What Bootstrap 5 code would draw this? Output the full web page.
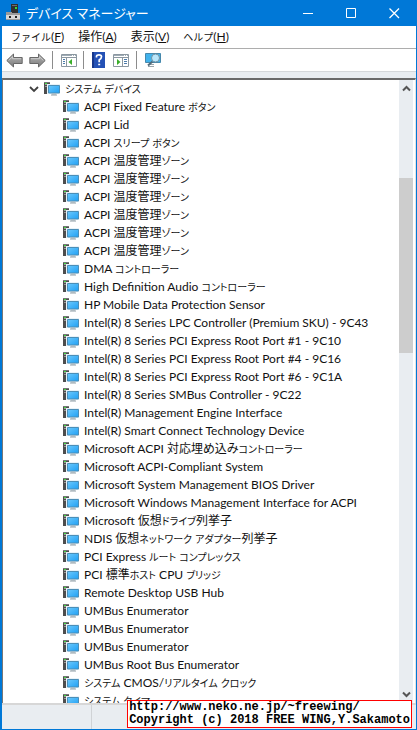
<!DOCTYPE html>
<html lang="ja">
<head>
<meta charset="utf-8">
<meta name="viewport" content="width=device-width, initial-scale=1">
<title>デバイス マネージャー</title>
<link rel="stylesheet" href="https://cdn.jsdelivr.net/npm/bootstrap@5.3.0/dist/css/bootstrap.min.css">
<style>
body{font-family:Lato,"Noto Sans CJK JP",sans-serif;font-size:12px;line-height:18px;color:#111;font-feature-settings:"palt";background:#fff}
.btn{color:inherit;font-size:12px;line-height:18px}
.kana{font-size:10px}
.window{border:1px solid #0078d7;border-width:0 1px 1px 2px}
.titlebar{background:#0078d7;color:#fff;height:26px;font-size:13px;padding-left:4px;gap:6px}
.titlebar .kana{font-size:13px}
.titlebar h1{font:inherit;line-height:26px}
.winbtn{width:43px;height:26px;line-height:0}
.menubar{height:23px;border-bottom:1px solid #adadad;padding-left:9px;gap:14px}
.toolbar{height:23px;border-bottom:1px solid #d5d8db;padding-left:4px}
.toolbar button{height:22px;line-height:0}
.sep{width:1px;height:18px;background:#8c8c8c;margin:0 8px 0 6px}
.forward{margin-left:6px}
.band{background:#e9edf1;height:6px}
.pane{border-top:2px solid #6a6a6a;border-left:1px solid #777;border-right:1px solid #e3e3e3}
.tree{padding-left:26px}
.tree ul{padding-left:34px}
.node{height:18px;gap:5px}
.scroll{width:14px;background:#e9edf1;margin-right:2px}
.scroll button{height:17px;line-height:0}
.thumb{background:#cdcdcd;height:175px;margin-top:81px}
.status{height:26px;background:#e9edf1;border-top:2px solid #d7d7d7}
.status div{width:90px;border-right:1px solid #d0d3d6}
.stamp{right:4px;bottom:1px;border:1px solid #f00;background:#fff;color:#000;font:bold 12px/13px "Liberation Mono",monospace;padding:0 1px}
.stamp a{color:#000}
</style>
<script src="https://cdn.jsdelivr.net/npm/bootstrap@5.3.0/dist/js/bootstrap.bundle.min.js"></script>
</head>
<body>
<svg class="position-absolute" width="0" height="0" aria-hidden="true">
 <defs>
  <linearGradient id="scr" x1="0" y1="0" x2="1" y2="1"><stop offset="0" stop-color="#6cc8fb"/><stop offset="1" stop-color="#1fa0f5"/></linearGradient>
  <linearGradient id="gr" x1="0" y1="0" x2="0" y2="1"><stop offset="0" stop-color="#b5b5b5"/><stop offset="1" stop-color="#7c7c7c"/></linearGradient>
 </defs>
 <symbol id="dev" viewBox="0 0 16 14">
  <path d="M0 0h6v12H0z" fill="#4d4d4d"/><path d="M0 0h6v1H0z" fill="#777"/>
  <path d="M1 2.500h4M1 4.500h3" stroke="#999"/><path d="M1 1h2v1H1z" fill="#3fd83f"/>
  <path d="M3 2h13v10H3z" fill="#e8f2f8"/><path d="M4.500 3.500h11v7.500h-11z" fill="url(#scr)" stroke="#4b8fb8"/>
  <path d="M8 11.500h4v1H8z" fill="#a5b3ba"/><path d="M7 12.500h6v1H7z" fill="#8e9ca4"/>
 </symbol>
 <symbol id="arrow" viewBox="0 0 17 15">
  <path d="M.8 7.500 7.500 1v3.500h8.700v6H7.500V14z" fill="url(#gr)" stroke="#686868"/>
  <path d="M2.600 7.500 6.500 3.700v2h8.500" fill="none" stroke="#ccc"/>
 </symbol>
 <symbol id="paneicon" viewBox="0 0 16 13">
  <path d="M.5.5h15v12H.5z" fill="#fff" stroke="#8b97a0"/><path d="M1 1h14v1H1z" fill="#9eabb5"/><path d="M11 1h1v1h-1zM13 1h1v1h-1z" fill="#fff"/><path d="M0 3.500h16" stroke="#8b97a0"/>
 </symbol>
</svg>
<main class="window vh-100 d-flex flex-column overflow-hidden position-relative">
 <header class="titlebar d-flex align-items-center flex-shrink-0">
  <svg width="14" height="18" viewBox="0 0 14 18"><path d="M5 0h7v11H5z" fill="#303030"/><path d="M6 1h5v1H6z" fill="#707070"/><path d="M9 3h2v2H9z" fill="#38d838"/><path d="M0 8h6v2H0z" fill="#999"/><path d="M0 9h14v7H0z" fill="#d8d8d8"/><path d="M0 9h14v2H0zM0 15h14v1H0z" fill="#9a9a9a"/><path d="M3 12h2v2H3zM9 12h2v2H9z" fill="#222"/></svg>
  <h1 class="m-0 flex-fill text-nowrap" data-kana>デバイス マネージャー</h1>
  <div class="d-flex">
   <button class="winbtn btn p-0 border-0 rounded-0" aria-label="最小化"><svg width="11" height="11" stroke="#fff"><path d="M0 5.500h10"/></svg></button>
   <button class="winbtn btn p-0 border-0 rounded-0" aria-label="最大化"><svg width="11" height="11" stroke="#fff" fill="none"><path d="M.5.5h9v9h-9z"/></svg></button>
   <button class="winbtn btn p-0 border-0 rounded-0" aria-label="閉じる"><svg width="11" height="11" stroke="#fff" stroke-width="1.300"><path d="M.5.5l9.500 9.500M10 .5.5 10"/></svg></button>
  </div>
 </header>
 <nav class="menubar d-flex align-items-center flex-shrink-0">
  <button class="btn p-0 border-0" data-kana>ファイル(<u>F</u>)</button>
  <button class="btn p-0 border-0" data-kana>操作(<u>A</u>)</button>
  <button class="btn p-0 border-0" data-kana>表示(<u>V</u>)</button>
  <button class="btn p-0 border-0" data-kana>ヘルプ(<u>H</u>)</button>
 </nav>
 <div class="toolbar d-flex align-items-center flex-shrink-0" role="toolbar" aria-label="ツール">
  <button class="btn p-0 border-0" aria-label="戻る"><svg width="17" height="15"><use href="#arrow"/></svg></button>
  <button class="forward btn p-0 border-0" aria-label="進む"><svg width="17" height="15"><g transform="translate(17 0) scale(-1 1)"><use href="#arrow"/></g></svg></button>
  <span class="sep"></span>
  <button class="btn p-0 border-0" aria-label="コンソール ツリー"><svg width="16" height="13"><use href="#paneicon"/><path d="M5.500 4v8" stroke="#8b97a0"/><path d="M2 5.500h2M2 7.500h2M2 9.500h2" stroke="#4c7cab"/><path d="M11 5v6L7.500 8z" fill="#3aae2a"/></svg></button>
  <span class="sep"></span>
  <button class="btn p-0 border-0" aria-label="ヘルプ"><svg width="13" height="16"><path d="M0 0h13v16H0z" fill="#2451b5"/><path d="M0 0h2v16H0z" fill="#17378b"/><path d="M4.500 5.500V4.200Q4.500 2.800 7 2.800t2.500 2Q9.500 6.500 7.200 8v2.200M6.200 12.500h2" fill="none" stroke="#fff" stroke-width="1.700"/></svg></button>
  <button class="btn p-0 border-0 ms-2" aria-label="操作ウィンドウ"><svg width="17" height="13"><use href="#paneicon" width="16"/><path d="M9.500 4v8" stroke="#8b97a0"/><path d="M11 5.500h3M11 7.500h3M11 9.500h3" stroke="#4c7cab"/><path d="M4 5v6l3.500-3z" fill="#3aae2a"/></svg></button>
  <span class="sep"></span>
  <button class="btn p-0 border-0" aria-label="ハードウェア変更のスキャン"><svg width="17" height="16"><path d="M.5 1.500h15v9H.5z" fill="#40b2ec" stroke="#4688ac"/><path d="M3 14.500h6M5 12.500h4" stroke="#9aa5ab"/><path d="m7.500 9.500-4.500 4" stroke="#526b7b" stroke-width="2"/><circle cx="10.500" cy="6" r="4" fill="#b9e6fb" stroke="#7291a2"/></svg></button>
 </div>
 <div class="band flex-shrink-0"></div>
 <section class="pane d-flex flex-fill overflow-hidden">
  <div class="tree flex-fill overflow-hidden text-nowrap">
   <div class="node d-flex align-items-center"><button class="btn p-0 border-0 lh-1" aria-label="折りたたむ"><svg width="10" height="7" fill="none" stroke="#404040" stroke-width="1.800"><path d="m1 1 4 4 4-4"/></svg></button><svg width="16" height="14"><use href="#dev"/></svg><span data-kana>システム デバイス</span></div>
   <ul id="devices" class="list-unstyled m-0"></ul>
  </div>
  <div class="scroll d-flex flex-column flex-shrink-0">
   <button class="btn p-0 border-0" aria-label="上へ"><svg width="9" height="7" fill="none" stroke="#555" stroke-width="2"><path d="m1 5.500 3.500-3.500 3.500 3.500"/></svg></button>
   <div class="thumb"></div>
   <button class="btn p-0 border-0 mt-auto" aria-label="下へ"><svg width="9" height="7" fill="none" stroke="#555" stroke-width="2"><path d="m1 1.500 3.500 3.500 3.500-3.500"/></svg></button>
  </div>
 </section>
 <footer class="status d-flex flex-shrink-0"><div></div></footer>
 <aside class="stamp position-absolute text-nowrap"><a class="text-decoration-none" href="#">http://www.neko.ne.jp/~freewing/</a><br>Copyright (c) 2018 FREE WING,Y.Sakamoto</aside>
</main>
<script>
const devices = [
 "ACPI Fixed Feature ボタン","ACPI Lid","ACPI スリープ ボタン",
 ...Array(6).fill("ACPI 温度管理ゾーン"),
 "DMA コントローラー","High Definition Audio コントローラー","HP Mobile Data Protection Sensor",
 "Intel(R) 8 Series LPC Controller (Premium SKU) - 9C43",
 "Intel(R) 8 Series PCI Express Root Port #1 - 9C10",
 "Intel(R) 8 Series PCI Express Root Port #4 - 9C16",
 "Intel(R) 8 Series PCI Express Root Port #6 - 9C1A",
 "Intel(R) 8 Series SMBus Controller - 9C22",
 "Intel(R) Management Engine Interface","Intel(R) Smart Connect Technology Device",
 "Microsoft ACPI 対応埋め込みコントローラー","Microsoft ACPI-Compliant System",
 "Microsoft System Management BIOS Driver","Microsoft Windows Management Interface for ACPI",
 "Microsoft 仮想ドライブ列挙子","NDIS 仮想ネットワーク アダプター列挙子",
 "PCI Express ルート コンプレックス","PCI 標準ホスト CPU ブリッジ","Remote Desktop USB Hub",
 "UMBus Enumerator","UMBus Enumerator","UMBus Enumerator","UMBus Root Bus Enumerator",
 "システム CMOS/リアルタイム クロック","システム タイマー"
];
document.getElementById("devices").innerHTML = devices.map(name =>
 `<li class="node d-flex align-items-center"><svg width="16" height="14" class="flex-shrink-0"><use href="#dev"/></svg><span data-kana>${name}</span></li>`).join("");
// Katakana runs are set slightly smaller than kanji
document.querySelectorAll("[data-kana]").forEach(el => {
 el.innerHTML = el.innerHTML.replace(/[\u30a0-\u30ff]+/g, '<span class="kana">$&</span>');
});
</script>
</body>
</html>
